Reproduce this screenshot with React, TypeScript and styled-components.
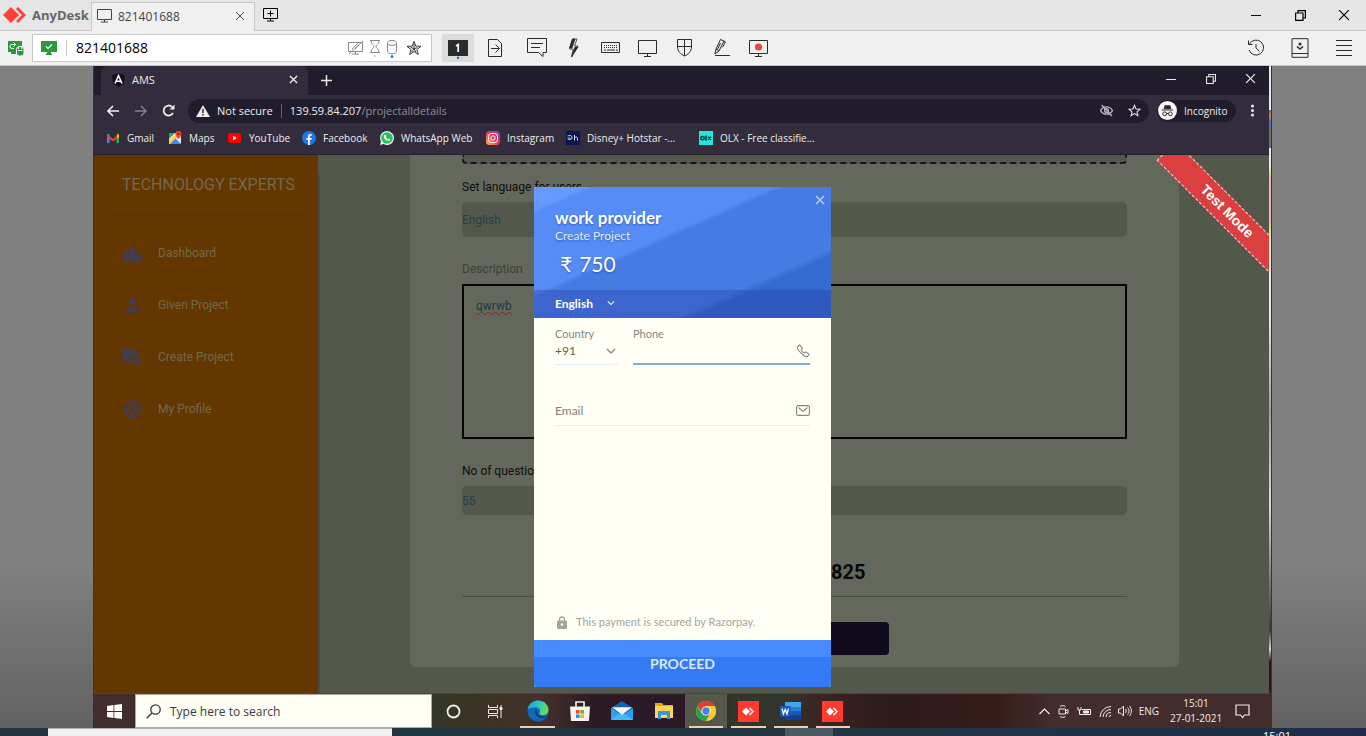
import React from "react";
import styled, { createGlobalStyle } from "styled-components";

const ui = `"Open Sans", "Noto Sans", sans-serif`;
const web = `Roboto, sans-serif`;
const pay = `Lato, "Noto Sans", sans-serif`;

const GlobalStyle = createGlobalStyle`
  *, *::before, *::after { box-sizing: border-box; }
  body { margin: 0; font-family: ${ui}; font-size: 11px; background: #808080; }
  button, input, select, textarea { font: inherit; color: inherit; margin: 0; padding: 0; border: 0; border-radius: 0; background: none; outline: 0; }
  button { display: flex; align-items: center; justify-content: center; flex: none; }
  a { color: inherit; text-decoration: none; }
  h1, h2, p { margin: 0; }
  svg { display: block; flex: none; }
`;

const Screen = styled.div`
  display: flex;
  flex-direction: column;
  min-height: 100vh;
  overflow: hidden;
`;

/* ---------- AnyDesk window ---------- */
const TitleBar = styled.header`
  display: flex;
  align-items: stretch;
  height: 31px;
  background: #e6e6e6;
  border-bottom: 1px solid #c8c8c8;
`;
const Brand = styled.div`
  display: flex;
  align-items: center;
  gap: 5px;
  width: 91px;
  padding-left: 3px;
  font-size: 13px;
  font-weight: 700;
  color: #666;
`;
const SessionTab = styled.div`
  display: flex;
  align-items: center;
  gap: 6px;
  width: 164px;
  height: 31px;
  margin-top: 2px;
  padding: 0 8px 4px 5px;
  background: #f0f0f0;
  border: 1px solid #c8c8c8;
  border-bottom: 0;
  font-size: 12px;
  color: #444;
`;
const Grow = styled.div`
  flex: 1;
`;
const PlainButton = styled.button<{ $w?: number }>`
  width: ${(p) => p.$w ?? 32}px;
`;
const WindowButtons = styled.div`
  display: flex;
`;
const ToolBar = styled.div`
  display: flex;
  align-items: center;
  height: 35px;
  background: #f0f0f0;
  border-bottom: 1px solid #c8c8c8;
  color: #2b2b2b;
`;
const AddressBox = styled.label`
  display: flex;
  align-items: center;
  width: 400px;
  height: 28px;
  padding: 0 6px 0 8px;
  background: #fff;
  border: 1px solid #c8c8c8;
`;
const AddressInput = styled.input`
  flex: 1;
  min-width: 0;
  margin-left: 9px;
  padding-left: 9px;
  border-left: 1px solid #c8c8c8;
  font-size: 14px;
  line-height: 16px;
  color: #000;
`;
const AddressIcons = styled.div`
  display: flex;
  align-items: center;
  gap: 5px;
`;
const ToolGroup = styled.div`
  display: flex;
  gap: 5px;
  margin-left: 10px;
`;
const ToolButton = styled.button<{ $active?: boolean }>`
  width: 32px;
  height: 28px;
  background: ${(p) => (p.$active ? "#dcdcdc" : "none")};
`;

/* ---------- Remote desktop ---------- */
const Stage = styled.div`
  flex: 1;
  display: flex;
  padding: 0 94px 0 93px;
  background: linear-gradient(#808080 75%, #626262);
`;
const Remote = styled.div`
  flex: 1;
  min-width: 0;
  display: flex;
  flex-direction: column;
  border-left: 1px solid #35343a;
  border-right: 1px solid #333;
`;
const Noise = styled.div`
  width: 2px;
  background: linear-gradient(#e8e8ee 7%, #6d7068 7%, #e07a30 8%, #3a6fe0 9%, #6d7068 10%, #6d7068 13%, #e8eaea 13%, #e8eaea 16%, #dfe26a 17%, #f0b5b5 18%, #f0b5b5 25%, #dfe26a 26%, #e8e8e0 28%, #e8e8e0 40%, #9ea39a 55%, #dddcd2 70%, #3a3b36 90%, #d8d8d0 93%, #2a1a1c 95%);
`;
const RemoteRow = styled.div`
  flex: 1;
  display: flex;
  min-width: 0;
`;
const Browser = styled.div`
  flex: 1;
  min-width: 0;
  display: flex;
  flex-direction: column;
`;
const TabStrip = styled.div`
  display: flex;
  height: 29px;
  padding-left: 7px;
  background: #211c2c;
  color: #e8e8e0;
`;
const BrowserTab = styled.div`
  display: flex;
  align-items: center;
  gap: 7px;
  width: 207px;
  padding: 0 6px 2px 11px;
  border-radius: 7px 7px 0 0;
  background: #322c3d;
`;
const BrowserButtons = styled.div`
  display: flex;
  padding: 0 0 4px;
`;
const NavBar = styled.div`
  display: flex;
  align-items: center;
  height: 31px;
  padding: 0 1px 0 5px;
  background: #322c3d;
  color: #eeeee6;
`;
const Omnibox = styled.div`
  flex: 1;
  display: flex;
  align-items: center;
  height: 24px;
  margin: 0 8px 0 6px;
  padding: 0 1px 0 8px;
  border-radius: 12px;
  background: #211c2c;
`;
const Security = styled.span`
  display: flex;
  align-items: center;
  gap: 7px;
  height: 14px;
  padding-right: 8px;
  margin-right: 8px;
  border-right: 1px solid #66626c;
`;
const Path = styled.span`
  color: #908e92;
`;
const Chip = styled.button`
  justify-content: flex-start;
  gap: 7px;
  width: 79px;
  height: 22px;
  padding-left: 1px;
  border-radius: 11px;
  background: #211c2c;
  font-size: 10px;
  font-weight: 500;
`;
const Bookmarks = styled.nav`
  display: grid;
  grid-template-columns: 62px 60px 74px 78px 106px 80px 133px auto;
  justify-content: start;
  align-items: center;
  height: 29px;
  padding: 0 0 5px 12px;
  background: #322c3d;
  border-bottom: 1px solid #26222c;
  color: #eeeee6;
  font-size: 10px;
  font-weight: 500;
`;
const Bookmark = styled.a`
  display: flex;
  align-items: center;
  gap: 7px;
  white-space: nowrap;
`;

/* ---------- Web page ---------- */
const Page = styled.div`
  flex: 1;
  position: relative;
  display: flex;
  overflow: hidden;
  background: #54574c;
  font-family: ${web};
  font-size: 12px;
`;
const SideBar = styled.aside`
  width: 224px;
  flex: none;
  background: #643600;
  color: #706a4c;
  box-shadow: 2px 20px 1px #484c43;
`;
const SideTitle = styled.h1`
  margin: 0 12px;
  padding-left: 16px;
  height: 61px;
  line-height: 60px;
  border-bottom: 1px solid #5a3504;
  font-size: 16px;
  font-weight: 400;
`;
const SideMenu = styled.nav`
  display: flex;
  flex-direction: column;
  padding: 11px 0 0 28px;
`;
const SideLink = styled.a`
  display: flex;
  align-items: center;
  gap: 15px;
  height: 52px;
  svg { color: #433d4e; }
`;
const Main = styled.main`
  flex: 1;
  min-width: 0;
  padding: 0 90px 26px 92px;
`;
const Card = styled.form`
  display: flex;
  flex-direction: column;
  height: 100%;
  padding: 0 52px;
  border-radius: 0 0 6px 6px;
  background: #64675c;
`;
const DropZone = styled.div`
  height: 9px;
  background: #54574c;
  border: 2px dashed #17122a;
  border-top: 0;
  border-radius: 0 0 4px 4px;
`;
const Field = styled.label<{ $gap: number; $muted?: boolean }>`
  display: flex;
  flex-direction: column;
  margin-top: ${(p) => p.$gap}px;
  line-height: 16px;
  color: ${(p) => (p.$muted ? "#3f4239" : "#0e0f0c")};
`;
const FieldInput = styled.input<{ $h: number }>`
  height: ${(p) => p.$h}px;
  margin-top: 7px;
  border-radius: 5px;
  background: #54574c;
  color: #21424e;
`;
const FieldArea = styled.textarea`
  height: 155px;
  margin-top: 7px;
  padding: 12px;
  border: 2px solid #050505;
  resize: none;
  color: #1d3a46;
  text-decoration: underline wavy #8e2030 1px;
`;
const Total = styled.output`
  width: 142px;
  margin: 45px auto 0;
  text-align: right;
  font-size: 20px;
  line-height: 24px;
  font-weight: 700;
  color: #080808;
`;
const Rule = styled.hr`
  width: 100%;
  margin: 12px 0 25px;
  border: 0;
  border-top: 1px solid #4a4d43;
`;
const DarkButton = styled.button`
  width: 189px;
  height: 33px;
  margin: 0 auto;
  border-radius: 4px;
  background: #100b1c;
`;
const Ribbon = styled.div`
  position: absolute;
  top: 43px;
  right: -44px;
  width: 172px;
  height: 27px;
  transform: rotate(45deg);
  background: #d9403f;
  border: 1px dashed #f0d8d4;
  color: #fff;
  font: bold 14px/25px "Liberation Sans", sans-serif;
  text-align: center;
`;

/* ---------- Payment dialog ---------- */
const Overlay = styled.div`
  position: absolute;
  inset: 0;
  display: flex;
  justify-content: center;
  align-items: flex-start;
  padding: 32px 0 0 2px;
`;
const Dialog = styled.section`
  display: flex;
  flex-direction: column;
  width: 297px;
  border-radius: 2px;
  overflow: hidden;
  background: #fffff6;
  font-family: ${pay};
`;
const DialogHead = styled.header`
  background: linear-gradient(156deg, #669aff 20px, #568cf5 25px, #568cf5 97px, #467be3 102px, #467be3 177px, #356ad0 184px);
  color: #fff;
`;
const Merchant = styled.div`
  display: flex;
  justify-content: space-between;
  align-items: flex-start;
  height: 103px;
  padding: 8px 5px 0 21px;
  text-shadow: 0 1px 2px rgba(20, 50, 130, 0.5);
`;
const MerchantText = styled.div`
  padding-top: 13px;
`;
const MerchantName = styled.h2`
  font-size: 17px;
  line-height: 20px;
  font-weight: 700;
`;
const Purpose = styled.p`
  font-size: 12px;
  line-height: 15px;
  color: #e2ecff;
`;
const Amount = styled.p`
  display: flex;
  gap: 7px;
  padding: 8px 0 0 5px;
  font-size: 21px;
  line-height: 26px;
`;
const CloseDialog = styled.button`
  width: 12px;
  color: #b9cdf8;
`;
const Language = styled.button`
  width: 100%;
  height: 28px;
  padding: 0 21px 2px;
  justify-content: flex-start;
  gap: 14px;
  background: rgba(30, 40, 140, 0.25);
  font-size: 12px;
  font-weight: 700;
`;
const DialogBody = styled.div`
  display: flex;
  flex-direction: column;
  height: 322px;
  padding: 9px 21px 9px;
  color: #85887f;
`;
const PayRow = styled.div`
  display: grid;
  grid-template-columns: 64px 1fr;
  gap: 14px;
`;
const PayField = styled.label<{ $focus?: boolean }>`
  display: flex;
  flex-direction: column;
  height: 38px;
  font-size: 11px;
  line-height: 14px;
  border-bottom: ${(p) => (p.$focus ? "2px solid #86abd0" : "1px solid #e2f0f0")};
`;
const PayLine = styled.span`
  display: flex;
  justify-content: space-between;
  align-items: center;
  height: 19px;
  font-size: 12px;
  color: #5c5f58;
  svg { color: #85887f; }
`;
const PayInput = styled.input`
  flex: 1;
  min-width: 0;
  &::placeholder { color: #7c7f77; opacity: 1; }
`;
const EmailField = styled.label`
  display: flex;
  align-items: center;
  height: 30px;
  margin-top: 31px;
  font-size: 12px;
  border-bottom: 1px solid #e2f0f0;
`;
const Secured = styled.p`
  display: flex;
  align-items: center;
  gap: 9px;
  margin-top: auto;
  padding-left: 2px;
  font-size: 11px;
  line-height: 18px;
  color: #a2a59c;
`;
const Proceed = styled.button`
  height: 47px;
  background: linear-gradient(#458aff 17px, #357af5 17px);
  color: #dbe7fb;
  font-size: 14px;
  font-weight: 700;
`;

/* ---------- Taskbars ---------- */
const TaskBar = styled.footer`
  display: flex;
  height: 35px;
  border-top: 1px solid #45483e;
  color: #f0ece6;
  background: linear-gradient(90deg, #432c2d 0, #33362b 338px, #3a3323 380px, #43302c 450px, #2b1a24 500px, #2b1a26 590px, #32352b 640px, #32352b 690px, #3a2523 720px, #2e1a1a 800px, #351c1a 900px, #432c2d 960px);
`;
const SearchBox = styled.label`
  display: flex;
  align-items: center;
  gap: 9px;
  width: 297px;
  padding-left: 10px;
  background: #fffff6;
  border: 1px solid #a9aaa0;
  color: #333;
`;
const SearchInput = styled.input`
  flex: 1;
  min-width: 0;
  font-size: 12px;
  &::placeholder { color: #333c42; opacity: 1; }
`;
const Apps = styled.div`
  display: flex;
  width: 422px;
`;
const AppButton = styled.button<{ $open?: boolean; $active?: boolean }>`
  flex: 1;
  position: relative;
  background: ${(p) => (p.$active ? "#54574c" : "none")};
  &::after {
    content: "";
    position: absolute;
    left: 4px;
    right: 4px;
    bottom: 0;
    height: 2px;
    background: ${(p) => (p.$open ? "#eccdb6" : "none")};
  }
`;
const Tray = styled.div`
  display: flex;
  align-items: center;
  margin-left: auto;
  padding-right: 21px;
  gap: 7px;
  font-size: 10px;
  font-weight: 500;
`;
const Clock = styled.time`
  width: 52px;
  margin: 0 6px 0 4px;
  line-height: 15px;
  text-align: center;
  white-space: nowrap;
`;
const HostBar = styled.footer`
  display: flex;
  height: 8px;
  overflow: hidden;
  background: linear-gradient(90deg, #223642 60%, #1e2c4a);
`;
const HostSearch = styled.div`
  width: 344px;
  margin-left: 48px;
  background: #f0f0f0;
  border-top: 1px solid #b0b0b0;
`;
const HostActive = styled.div`
  width: 48px;
  margin-left: 393px;
  background: #4a5964;
`;
const HostClock = styled.time`
  margin-left: auto;
  padding-right: 75px;
  font-size: 11px;
  line-height: 16px;
  color: #fff;
`;

/* ---------- Icons ---------- */
type G = { w?: number; h?: number; box: string; sw?: number; children: React.ReactNode };
const Ico = ({ w = 20, h, box, sw = 1, children }: G) => (
  <svg width={w} height={h ?? w} viewBox={box} fill="none" stroke="currentColor" strokeWidth={sw} aria-hidden="true">
    {children}
  </svg>
);
const Cross = ({ s, sw = 1 }: { s: number; sw?: number }) => (
  <Ico w={s} box="0 0 10 10" sw={sw}><path d="M1 1l8 8M9 1L1 9" /></Ico>
);
const Down = ({ s }: { s: number }) => (
  <Ico w={s} box="0 0 10 10" sw={1.3}><path d="M1 3l4 4 4-4" /></Ico>
);
const Monitor = ({ children }: { children?: React.ReactNode }) => (
  <Ico box="0 0 20 20"><path d="M.5 2.500h18v13H.5zM9.500 15.500V18M6 18.500h7" />{children}</Ico>
);
const SmallMonitor = ({ children }: { children?: React.ReactNode }) => (
  <Ico w={15} h={14} box="0 0 15 14"><path d="M.5.500h14v10H.5zM7.500 10.500V13M4 13h7" />{children}</Ico>
);
const DeskMark = () => (
  <svg width="24" height="16" viewBox="0 0 24 16" fill="#ff4038" aria-hidden="true">
    <path d="M8 0l8 8-8 8-8-8z" />
    <path d="M13 2l2-2 8 8-8 8-2-2 6-6z" />
  </svg>
);
const Restore = ({ s }: { s: number }) => (
  <Ico w={s} box="0 0 11 11" sw={1.2}><path d="M.6 3h7.400v7.400H.6zM3 3V.6h7.400V8H8" /></Ico>
);
const Dash = () => <Ico w={10} box="0 0 10 10" sw={1}><path d="M0 5.500h10" /></Ico>;

const Star = ({ s, sw }: { s: number; sw: number }) => (
  <Ico w={s} box="0 0 24 24" sw={sw}><path d="M12 2.500l2.900 6.600 7.100.7-5.400 4.700 1.600 7L12 17.800l-6.200 3.700 1.600-7L2 9.800l7.100-.7z" /></Ico>
);

const tools: { name: string; icon: React.ReactNode }[] = [
  { name: "Chat", icon: <Ico box="0 0 20 20"><path d="M.5.500h19v14H16v4l-4.500-4H.5zM4 5.500h12M4 9.500h9" /></Ico> },
  { name: "Actions", icon: <Ico box="0 0 20 20" sw={0.8}><path d="M8.500 1H13l-2.500 7H14L7.500 19l1.700-8H5.500z" /><path d="M8.500 1H11L8 10H5.500zM11 9h3L7.500 19z" fill="currentColor" /></Ico> },
  { name: "Keyboard", icon: <Ico w={20} h={12} box="0 0 20 12" sw={1}><path d="M.5.500h18v10H.5z" /><path d="M3 3.500h14M3 5.500h14" strokeDasharray="1 1" /><path d="M3 8h2M6 8h8M15 8h2" /></Ico> },
  { name: "Display", icon: <Monitor /> },
  { name: "Permissions", icon: <Ico box="0 0 20 20"><path d="M2.500 1.500h14V9c0 4.500-3.500 7.500-7 9-3.500-1.500-7-4.500-7-9zM9.500 1.500V18M2.500 8.500h14" /></Ico> },
  { name: "Whiteboard", icon: <Ico box="0 0 20 20"><path d="M3 16l1-5 4.500-9.500 3.500 1.500-5 10zM4 11l3 2M8.500 5l-3 6.500M12 3l1.500.8-3 5.500M3 17.500h15" /></Ico> },
  { name: "Record", icon: <Monitor><circle cx="9.500" cy="9" r="3.600" fill="#e8483e" stroke="none" /></Monitor> },
];

const bookmarks: { name: string; icon: React.ReactNode }[] = [
  { name: "Gmail", icon: <svg width="14" height="14" viewBox="0 0 14 14"><path d="M1 12V3h2.500v9z" fill="#4285f4" /><path d="M10.500 12V3H13v9z" fill="#34a853" /><path d="M1 3l6 5 6-5v3l-6 4.500L1 6z" fill="#ea4335" /><path d="M11 4.500L13 3v3l-2 1.500z" fill="#fbbc04" /></svg> },
  { name: "Maps", icon: <svg width="14" height="14" viewBox="0 0 14 14"><rect x="1" y="2" width="12" height="11" rx="1" fill="#e8eaed" /><path d="M1 2h6L1 8z" fill="#34a853" /><path d="M1 13l6-6 6 6z" fill="#4285f4" /><path d="M1 10l7-7 2 2-8 8H1z" fill="#fbd04c" /><path d="M10.500 0a3 3 0 013 3c0 2-3 5-3 5s-3-3-3-5a3 3 0 013-3z" fill="#ea4335" /><circle cx="10.500" cy="3" r="1" fill="#811" /></svg> },
  { name: "YouTube", icon: <svg width="14" height="14" viewBox="0 0 14 14"><rect x="0" y="2" width="13" height="10" rx="3" fill="#f00" /><path d="M5 4.800v4.400L8.800 7z" fill="#fff" /></svg> },
  { name: "Facebook", icon: <svg width="14" height="14" viewBox="0 0 14 14"><circle cx="7" cy="7" r="7" fill="#1877f2" /><path d="M6 14V8.800H4.300V7H6V5.500C6 3.800 7 3 8.400 3l1.300.1v1.600h-.9c-.8 0-1 .4-1 1V7h1.900l-.3 1.800H7.800V14z" fill="#fff" /></svg> },
  { name: "WhatsApp Web", icon: <svg width="14" height="14" viewBox="0 0 14 14"><path d="M7 0a7 7 0 11-3.400 13.100L0 14l1-3.500A7 7 0 017 0z" fill="#eef" /><circle cx="7" cy="7" r="5.800" fill="#25c653" /><path d="M4.800 3.800l1 .1.500 1.500-.6.800c.5 1 1.200 1.600 2.100 2l.8-.8 1.500.8c0 1.300-1 1.800-2 1.600C5.800 9.300 4 7.500 3.800 5.500c0-.8.400-1.400 1-1.700z" fill="#fff" /></svg> },
  { name: "Instagram", icon: <svg width="14" height="14" viewBox="0 0 14 14"><defs><linearGradient id="ig" x1="0" y1="1" x2="1" y2="0"><stop offset="0" stopColor="#fdc04a" /><stop offset=".5" stopColor="#e8334f" /><stop offset="1" stopColor="#8b3bd0" /></linearGradient></defs><rect width="14" height="14" rx="3.500" fill="url(#ig)" /><rect x="2.500" y="2.500" width="9" height="9" rx="2.800" fill="none" stroke="#fff" /><circle cx="7" cy="7" r="2.200" fill="none" stroke="#fff" /></svg> },
  { name: "Disney+ Hotstar -...", icon: <svg width="14" height="14" viewBox="0 0 14 14"><rect width="14" height="14" fill="#0b1450" /><path d="M1.500 5c3-1.200 5 0 4.500 2.200-.5 2-4.500 1.600-4 .2.300-.8 1.800-.6 2.500 0M8.500 4v5.500M8.500 7c1-1.500 3-1.200 3 .5v2" fill="none" stroke="#dfe4ff" /></svg> },
  { name: "OLX - Free classifie...", icon: <svg width="14" height="14" viewBox="0 0 14 14"><rect width="14" height="14" fill="#23e5db" /><circle cx="3.500" cy="7.200" r="1.700" fill="none" stroke="#002f34" strokeWidth="1.400" /><path d="M7 4.500v5.300M9 5.800l3 3M12 5.800l-3 3" stroke="#002f34" strokeWidth="1.400" /></svg> },
];

const menu: { name: string; icon: React.ReactNode }[] = [
  { name: "Dashboard", icon: <svg width="21" height="21" viewBox="0 0 21 21" fill="currentColor"><path d="M2 9h5v10H2zM8 4h5v15H8zM14 11h5v8h-5z" /></svg> },
  { name: "Given Project", icon: <svg width="21" height="21" viewBox="0 0 24 24" fill="currentColor"><path d="M12 12a4 4 0 100-8 4 4 0 000 8zm0 2c-2.700 0-8 1.300-8 4v2h16v-2c0-2.700-5.300-4-8-4z" /></svg> },
  { name: "Create Project", icon: <svg width="21" height="21" viewBox="2 0 24 24" fill="currentColor"><path d="M21 6h-2v9H6v2c0 .6.500 1 1 1h11l4 4V7c0-.6-.4-1-1-1zm-4 6V3c0-.6-.4-1-1-1H3c-.6 0-1 .4-1 1v14l4-4h10c.6 0 1-.4 1-1z" /></svg> },
  { name: "My Profile", icon: <svg width="21" height="21" viewBox="0 0 21 21" fill="none" stroke="currentColor"><circle cx="10.500" cy="10.500" r="8" strokeWidth="1.800" /><circle cx="10.500" cy="10.500" r="5.500" strokeWidth="4" strokeDasharray="4.640 4" strokeDashoffset="2.320" /><circle cx="10.500" cy="10.500" r="3" strokeWidth="1.500" /></svg> },
];

const DeskTile = () => (
  <svg width="21" height="21" viewBox="0 0 21 21"><rect width="21" height="21" fill="#ff3b30" /><path d="M8 6.500l4 4-4 4-4-4zM11 7.500l1-1 4 4-4 4-1-1 3-3z" fill="#fff" /></svg>
);
const apps: { name: string; open?: boolean; active?: boolean; icon: React.ReactNode }[] = [
  { name: "Cortana", icon: <Ico w={15} box="0 0 15 15" sw={1.800}><circle cx="7.500" cy="7.500" r="6" /></Ico> },
  { name: "Task view", icon: <Ico w={15} box="0 0 15 15"><path d="M.5 1v2.500h9V1M.5 14v-2.500h9V14M.5 5.500h9v4h-9zM13 1v13" /><path d="M12 3.500h2v2h-2z" fill="currentColor" /></Ico> },
  { name: "Edge", open: true, icon: <svg width="22" height="22" viewBox="0 0 22 22"><defs><linearGradient id="eg" x1="0" y1="0" x2="1" y2=".3"><stop offset="0" stopColor="#1a9be0" /><stop offset=".6" stopColor="#30c8c0" /><stop offset="1" stopColor="#66dc58" /></linearGradient></defs><circle cx="11" cy="11" r="10.500" fill="#1466b8" /><path d="M.6 9.500C1.500 4 6 .5 11 .5c6 0 10.500 4.300 10.500 9.200 0 3.300-2.600 5.300-5.500 5.300-2.500 0-3.800-.9-3.800-1.600 0-.6.900-1 .9-2.400C13 9 11 7.300 8.500 7.300c-3.500 0-6.500 1-7.900 2.200z" fill="url(#eg)" /><path d="M8.500 9c-1.800 5 2 9.500 7.500 9.300l4.300-2c-1.300 0-3.300.6-5.300.2-3-.5-5-3-5.300-6z" fill="#0c3f7e" /></svg> },
  { name: "Store", icon: <svg width="20" height="20" viewBox="0 0 20 20"><path d="M6 6V1h8v5" fill="none" stroke="#f6f4ec" strokeWidth="1.600" /><path d="M0 5.500h20l-1 14.500H1z" fill="#f6f4ec" /><path d="M6 9h3.600v3.600H6z" fill="#e8502a" /><path d="M10.400 9H14v3.600h-3.600z" fill="#6fb02c" /><path d="M6 13.400h3.600V17H6z" fill="#1e98e4" /><path d="M10.400 13.400H14V17h-3.600z" fill="#f6b21c" /></svg> },
  { name: "Mail", icon: <svg width="22" height="20" viewBox="0 0 22 20"><path d="M0 7l11-7 11 7v12H0z" fill="#1065b0" /><path d="M0 7l11 7.500L22 7v12H0z" fill="#2aa3ec" /><path d="M0 19l11-8 11 8z" fill="#43b9f8" /><path d="M1 6.300h20l-10 7.500z" fill="#f4f6f2" /></svg> },
  { name: "Files", icon: <svg width="20" height="18" viewBox="0 0 20 18"><path d="M1 1h7l1.500 2H19v4H1z" fill="#e8a51c" /><path d="M1 4h18v12H1z" fill="#fbd45c" /><path d="M4 9h12v8h-3v-4H7v4H4z" fill="#3f93d4" /></svg> },
  { name: "Chrome", active: true, open: true, icon: <svg width="20" height="20" viewBox="0 0 20 20"><circle cx="10" cy="10" r="10" fill="#fcc934" /><path d="M1.340 5A10 10 0 0118.660 5H10L7 13z" fill="#e33b2e" /><path d="M1.340 5A10 10 0 0010 20l4.300-7.500L5.700 12.500z" fill="#2aa350" /><path d="M10 20a10 10 0 008.660-15H10l4.300 7.500z" fill="#fcc934" /><circle cx="10" cy="10" r="4.600" fill="#fff" /><circle cx="10" cy="10" r="3.700" fill="#3f82ef" /></svg> },
  { name: "AnyDesk", open: true, icon: <DeskTile /> },
  { name: "Word", open: true, icon: <svg width="21" height="20" viewBox="0 0 21 20"><path d="M5 1h16v5H5z" fill="#41a5ee" /><path d="M5 6h16v4H5z" fill="#2b7cd3" /><path d="M5 10h16v4.500H5z" fill="#185abd" /><path d="M5 14.500h16V19H5z" fill="#103f91" /><path d="M0 5h10.500v10.500H0z" fill="#185abd" /><path d="M2 7.500l1.400 5.400L5.200 8.500 7 12.900l1.500-5.400" fill="none" stroke="#fff" strokeWidth="1.300" /></svg> },
  { name: "AnyDesk client", open: true, icon: <DeskTile /> },
];

export default function App() {
  return (
    <Screen>
      <GlobalStyle />
      <TitleBar>
        <Brand><DeskMark />AnyDesk</Brand>
        <SessionTab>
          <SmallMonitor />821401688<Grow />
          <PlainButton $w={12} aria-label="Close tab"><Cross s={10} /></PlainButton>
        </SessionTab>
        <PlainButton $w={30} aria-label="New tab"><SmallMonitor><path d="M7.500 2.500v6M4.500 5.500h6" /></SmallMonitor></PlainButton>
        <Grow />
        <WindowButtons>
          <PlainButton $w={44} aria-label="Minimize"><Dash /></PlainButton>
          <PlainButton $w={44} aria-label="Restore"><Restore s={11} /></PlainButton>
          <PlainButton $w={44} aria-label="Close"><Cross s={12} /></PlainButton>
        </WindowButtons>
      </TitleBar>
      <ToolBar>
        <PlainButton aria-label="Connection">
          <svg width="16" height="16" viewBox="0 0 16 16"><path d="M0 1h14v11H8v2H3v-2H0z" fill="#2a9a3c" /><path d="M7 4.500H4a2 2 0 000 4h2M5.500 2.500l2 2-2 2" fill="none" stroke="#fff" /><rect x="8.500" y="6.500" width="7.500" height="9.500" rx="3" fill="#2a9a3c" stroke="#f0f0f0" /><path d="M10.500 9V8a1.700 1.700 0 013.400 0v1M10 10.500h4.500" fill="none" stroke="#fff" /></svg>
        </PlainButton>
        <AddressBox>
          <svg width="16" height="14" viewBox="0 0 16 14"><path d="M0 0h16v11h-6v1.500h1V14H5v-1.500h1V11H0z" fill="#2a9a3c" /><path d="M5 5.500L7 7.500l4-4" fill="none" stroke="#fff" strokeWidth="1.200" /></svg>
          <AddressInput aria-label="Remote address" defaultValue="821401688" />
          <AddressIcons>
            <Ico w={16} h={15} box="0 0 16 15"><g stroke="#888"><path d="M.5 1.500h14v9H.5zM7.500 10.500V13M4 13h7M1 13L15 0M4 8l6-6M7 8l4-4" /></g></Ico>
            <Ico w={12} h={18} box="0 0 12 18"><g stroke="#888"><path d="M1 1.500h10M1 13.500h10M2 1.500c0 4 3 4.500 3 6s-3 2.500-3 6M10 1.500c0 4-3 4.500-3 6s3 2.500 3 6" /></g><circle cx="6" cy="17" r="1.200" fill="#c8dcf8" stroke="none" /></Ico>
            <Ico w={12} h={19} box="0 0 12 19"><g stroke="#888"><ellipse cx="6" cy="4" rx="4.500" ry="2.500" /><path d="M1.500 4v8.500c0 3 9 3 9 0V4" /></g><circle cx="6" cy="17.500" r="1.500" fill="#2a78e0" stroke="none" /></Ico>
            <PlainButton $w={22} aria-label="Favourite"><Ico w={16} box="0 0 24 24" sw={1.400}><path d="M12 2l2.700 7.300 7.800.2-6.200 4.800 2.200 7.500L12 17.400l-6.500 4.400 2.200-7.500L1.500 9.500l7.800-.2zM12 6v7l5-1.500M12 13l3 5M12 13l-3.500 5M12 13l-5-2" /></Ico></PlainButton>
          </AddressIcons>
        </AddressBox>
        <ToolGroup>
          <ToolButton $active aria-label="Screen 1">
            <svg width="20" height="22" viewBox="0 0 20 22"><path d="M0 3h20v16H0z" fill="#2b2b2b" /><path d="M8 9l2.200-1.500V15" fill="none" stroke="#fff" strokeWidth="1.700" /><circle cx="10" cy="20.800" r="1.300" fill="#2a78e0" /></svg>
          </ToolButton>
          <ToolButton aria-label="File transfer">
            <Ico box="0 0 20 20"><path d="M3.500 1.500h9l4 4v13h-13zM6 10.500h8M10.500 6.500l4 4-4 4" /></Ico>
          </ToolButton>
        </ToolGroup>
        <ToolGroup>
          {tools.map((t) => <ToolButton key={t.name} aria-label={t.name}>{t.icon}</ToolButton>)}
        </ToolGroup>
        <Grow />
        <PlainButton $w={44} aria-label="History"><Ico w={18} box="0 0 18 18"><path d="M2.500 5A7.500 7.500 0 112 11M1.500 1.500v4h4M9 5v4l3.500 3.500" /></Ico></PlainButton>
        <PlainButton $w={44} aria-label="Address book"><Ico w={18} h={20} box="0 0 18 20"><path d="M1 .7h16v18.600H1zM1 15.500h16" /><path d="M6 8.500l3 2.500 3-2.500" strokeWidth="1.600" /><circle cx="9" cy="6" r="1.500" fill="currentColor" stroke="none" /></Ico></PlainButton>
        <PlainButton $w={44} aria-label="Menu"><Ico w={16} box="0 0 16 16"><path d="M0 .5h16M0 5.500h16M0 10.500h16M0 15.500h16" /></Ico></PlainButton>
      </ToolBar>

      <Stage>
        <Remote>
          <RemoteRow>
            <Browser>
              <TabStrip>
                <BrowserTab>
                  <svg width="13" height="14" viewBox="0 0 13 14"><path d="M6.500 0L13 2.300l-1 8.400L6.500 14 1 10.700 0 2.300z" fill="#12101c" /><path d="M3 10.500L6.500 2.500l3.500 8M4.500 8.300h4" fill="none" stroke="#fff" strokeWidth="1.500" /></svg>
                  AMS<Grow />
                  <PlainButton $w={18} aria-label="Close AMS tab"><Cross s={9} sw={1.600} /></PlainButton>
                </BrowserTab>
                <PlainButton $w={36} aria-label="Open tab"><Ico w={11} box="0 0 11 11" sw={1.500}><path d="M5.500 0v11M0 5.500h11" /></Ico></PlainButton>
                <Grow />
                <BrowserButtons>
                  <PlainButton $w={40} aria-label="Minimize browser"><Dash /></PlainButton>
                  <PlainButton $w={40} aria-label="Restore browser"><Restore s={10} /></PlainButton>
                  <PlainButton $w={38} aria-label="Close browser"><Cross s={11} sw={1.200} /></PlainButton>
                </BrowserButtons>
              </TabStrip>
              <NavBar>
                <PlainButton $w={28} aria-label="Back"><Ico w={12} box="0 0 12 12" sw={1.600}><path d="M12 6H1M6 1L1 6l5 5" /></Ico></PlainButton>
                <PlainButton $w={27} aria-label="Forward"><Ico w={12} box="0 0 12 12" sw={1.400}><path stroke="#85818c" d="M0 6h11M6 1l5 5-5 5" /></Ico></PlainButton>
                <PlainButton $w={28} aria-label="Reload"><Ico w={13} box="0 0 13 13" sw={1.800}><path d="M11 9A5 5 0 1110 2.800" /><path d="M12.500.5v5h-5z" fill="currentColor" stroke="none" /></Ico></PlainButton>
                <Omnibox>
                  <Security>
                    <svg width="14" height="12" viewBox="0 0 14 12"><path d="M7 0l7 12H0z" fill="#eeeee6" /><path d="M7 4v4M7 9v1.500" stroke="#211c2c" strokeWidth="1.400" /></svg>
                    Not secure
                  </Security>
                  <span>139.59.84.207<Path>/projectalldetails</Path></span>
                  <Grow />
                  <PlainButton $w={28} aria-label="Third-party cookies blocked"><Ico w={13} box="0 0 24 24" sw={2.500}><g stroke="#b8b6bc"><path d="M1 12c5-9 17-9 22 0-5 9-17 9-22 0zM3 2l19 20" /><circle cx="12" cy="12" r="3.500" /></g></Ico></PlainButton>
                  <PlainButton $w={28} aria-label="Bookmark this page"><Star s={13} sw={2} /></PlainButton>
                </Omnibox>
                <Chip>
                  <svg width="19" height="19" viewBox="0 0 20 20"><circle cx="10" cy="10" r="10" fill="#f6f6f0" /><path d="M7 4.500h6l1 4H6zM4 9h12v1H4z" fill="#2b2733" /><g fill="none" stroke="#2b2733"><circle cx="7" cy="13.500" r="2" /><circle cx="13" cy="13.500" r="2" /><path d="M9 13.200h2" /></g></svg>
                  Incognito
                </Chip>
                <PlainButton aria-label="Browser menu"><svg width="3" height="13" viewBox="0 0 3 13" fill="#eeeee6"><circle cx="1.500" cy="2" r="1.500" /><circle cx="1.500" cy="6.500" r="1.500" /><circle cx="1.500" cy="11" r="1.500" /></svg></PlainButton>
              </NavBar>
              <Bookmarks>
                {bookmarks.map((b) => <Bookmark key={b.name} href="#">{b.icon}{b.name}</Bookmark>)}
              </Bookmarks>
              <Page>
                <SideBar>
                  <SideTitle>TECHNOLOGY EXPERTS</SideTitle>
                  <SideMenu>
                    {menu.map((m) => <SideLink key={m.name} href="#">{m.icon}{m.name}</SideLink>)}
                  </SideMenu>
                </SideBar>
                <Main>
                  <Card>
                    <DropZone />
                    <Field $gap={15}>Set language for users<FieldInput $h={35} defaultValue="English" /></Field>
                    <Field $gap={24} $muted>Description<FieldArea spellCheck={false} defaultValue="qwrwb" /></Field>
                    <Field $gap={24}>No of questions<FieldInput $h={29} defaultValue="55" /></Field>
                    <Total>825</Total>
                    <Rule />
                    <DarkButton type="button" aria-label="Pay" />
                  </Card>
                </Main>
                <Overlay>
                  <Dialog role="dialog" aria-label="Payment">
                    <DialogHead>
                      <Merchant>
                        <MerchantText>
                          <MerchantName>work provider</MerchantName>
                          <Purpose>Create Project</Purpose>
                          <Amount><span>₹</span><span>750</span></Amount>
                        </MerchantText>
                        <CloseDialog aria-label="Close payment"><Cross s={10} sw={1.500} /></CloseDialog>
                      </Merchant>
                      <Language>English<Down s={8} /></Language>
                    </DialogHead>
                    <DialogBody>
                      <PayRow>
                        <PayField>Country<PayLine><PayInput defaultValue="+91" /><PlainButton $w={16} aria-label="Choose country"><Down s={10} /></PlainButton></PayLine></PayField>
                        <PayField $focus>Phone<PayLine><PayInput type="tel" /><Ico w={14} box="0 0 24 24" sw={1.800}><path d="M6 1.500L2.500 4.500C1 9 14 23 19.500 21.500l3-3.500-5.500-4.500-3 2c-2-1-4.500-4-5-6l2-2.500z" strokeLinejoin="round" /></Ico></PayLine></PayField>
                      </PayRow>
                      <EmailField>
                        <PayInput type="email" placeholder="Email" aria-label="Email" />
                        <Ico w={14} h={11} box="0 0 14 11" sw={1.100}><rect x=".6" y=".6" width="12.800" height="9.800" rx="1.500" /><path d="M2.500 2.500L7 6.500l4.500-4" /></Ico>
                      </EmailField>
                      <Secured>
                        <svg width="10" height="13" viewBox="0 0 10 13"><path d="M2.500 5V3.500a2.500 2.500 0 015 0V5" fill="none" stroke="#a2a59c" strokeWidth="1.300" /><rect y="4.500" width="10" height="8.500" rx="1.500" fill="#a2a59c" /><circle cx="5" cy="8.500" r="1.200" fill="#fffff6" /></svg>
                        This payment is secured by Razorpay.
                      </Secured>
                    </DialogBody>
                    <Proceed>PROCEED</Proceed>
                  </Dialog>
                </Overlay>
                <Ribbon>Test Mode</Ribbon>
              </Page>
            </Browser>
            <Noise />
          </RemoteRow>
          <TaskBar>
            <PlainButton $w={41} aria-label="Start"><svg width="15" height="15" viewBox="0 0 15 15" fill="#fffff6"><path d="M0 2l6.500-1v6H0zM7.300.9L15 0v7H7.300zM0 8h6.500v6L0 13zM7.300 8H15v7l-7.700-1z" /></svg></PlainButton>
            <SearchBox>
              <Ico w={15} box="0 0 15 15" sw={1.300}><circle cx="9.500" cy="5.500" r="4.700" /><path d="M6 9L.8 14.200" /></Ico>
              <SearchInput placeholder="Type here to search" aria-label="Search" />
            </SearchBox>
            <Apps>
              {apps.map((a) => <AppButton key={a.name} $open={a.open} $active={a.active} aria-label={a.name}>{a.icon}</AppButton>)}
            </Apps>
            <Tray>
              <Ico w={11} box="0 0 11 11" sw={1.200}><path d="M.5 8l5-5 5 5" /></Ico>
              <Ico w={13} box="0 0 13 13"><path d="M2 4h6.500v5H2zM8.500 6L11 4.500v4L8.500 7M3 1.500c1.500-1.200 4-1.200 5.500 0M3 11.500c1.500 1.200 4 1.200 5.500 0" /></Ico>
              <Ico w={15} h={11} box="0 0 15 11"><path d="M5 3.500h8.500v5H5M1 1v3h3V1M2.500 4v4.500H5" /><path d="M6.500 5h5v2h-5z" fill="currentColor" /></Ico>
              <Ico w={12} box="0 0 12 12"><path d="M1 12A11 11 0 0112 1.500M4 12a8 8 0 018-7.500M7 12a5 5 0 015-4.500M10 12a2 2 0 012-1.500" /></Ico>
              <Ico w={14} h={12} box="0 0 14 12"><path d="M.5 4h2L5.500 1v10l-3-3h-2zM7.500 4c1 1 1 3 0 4M9.500 2.500c2 2 2 5 0 7M11.500 1c2.500 3 2.500 7 0 10" /></Ico>
              <span>ENG</span>
              <Clock>15:01<br />27-01-2021</Clock>
              <Ico w={15} box="0 0 15 15" sw={1.200}><path d="M1 1h13v10H9.500l-2 2.500-2-2.500H1z" /></Ico>
            </Tray>
          </TaskBar>
        </Remote>
      </Stage>
      <HostBar>
        <HostSearch />
        <HostActive />
        <HostClock>15:01</HostClock>
      </HostBar>
    </Screen>
  );
}
